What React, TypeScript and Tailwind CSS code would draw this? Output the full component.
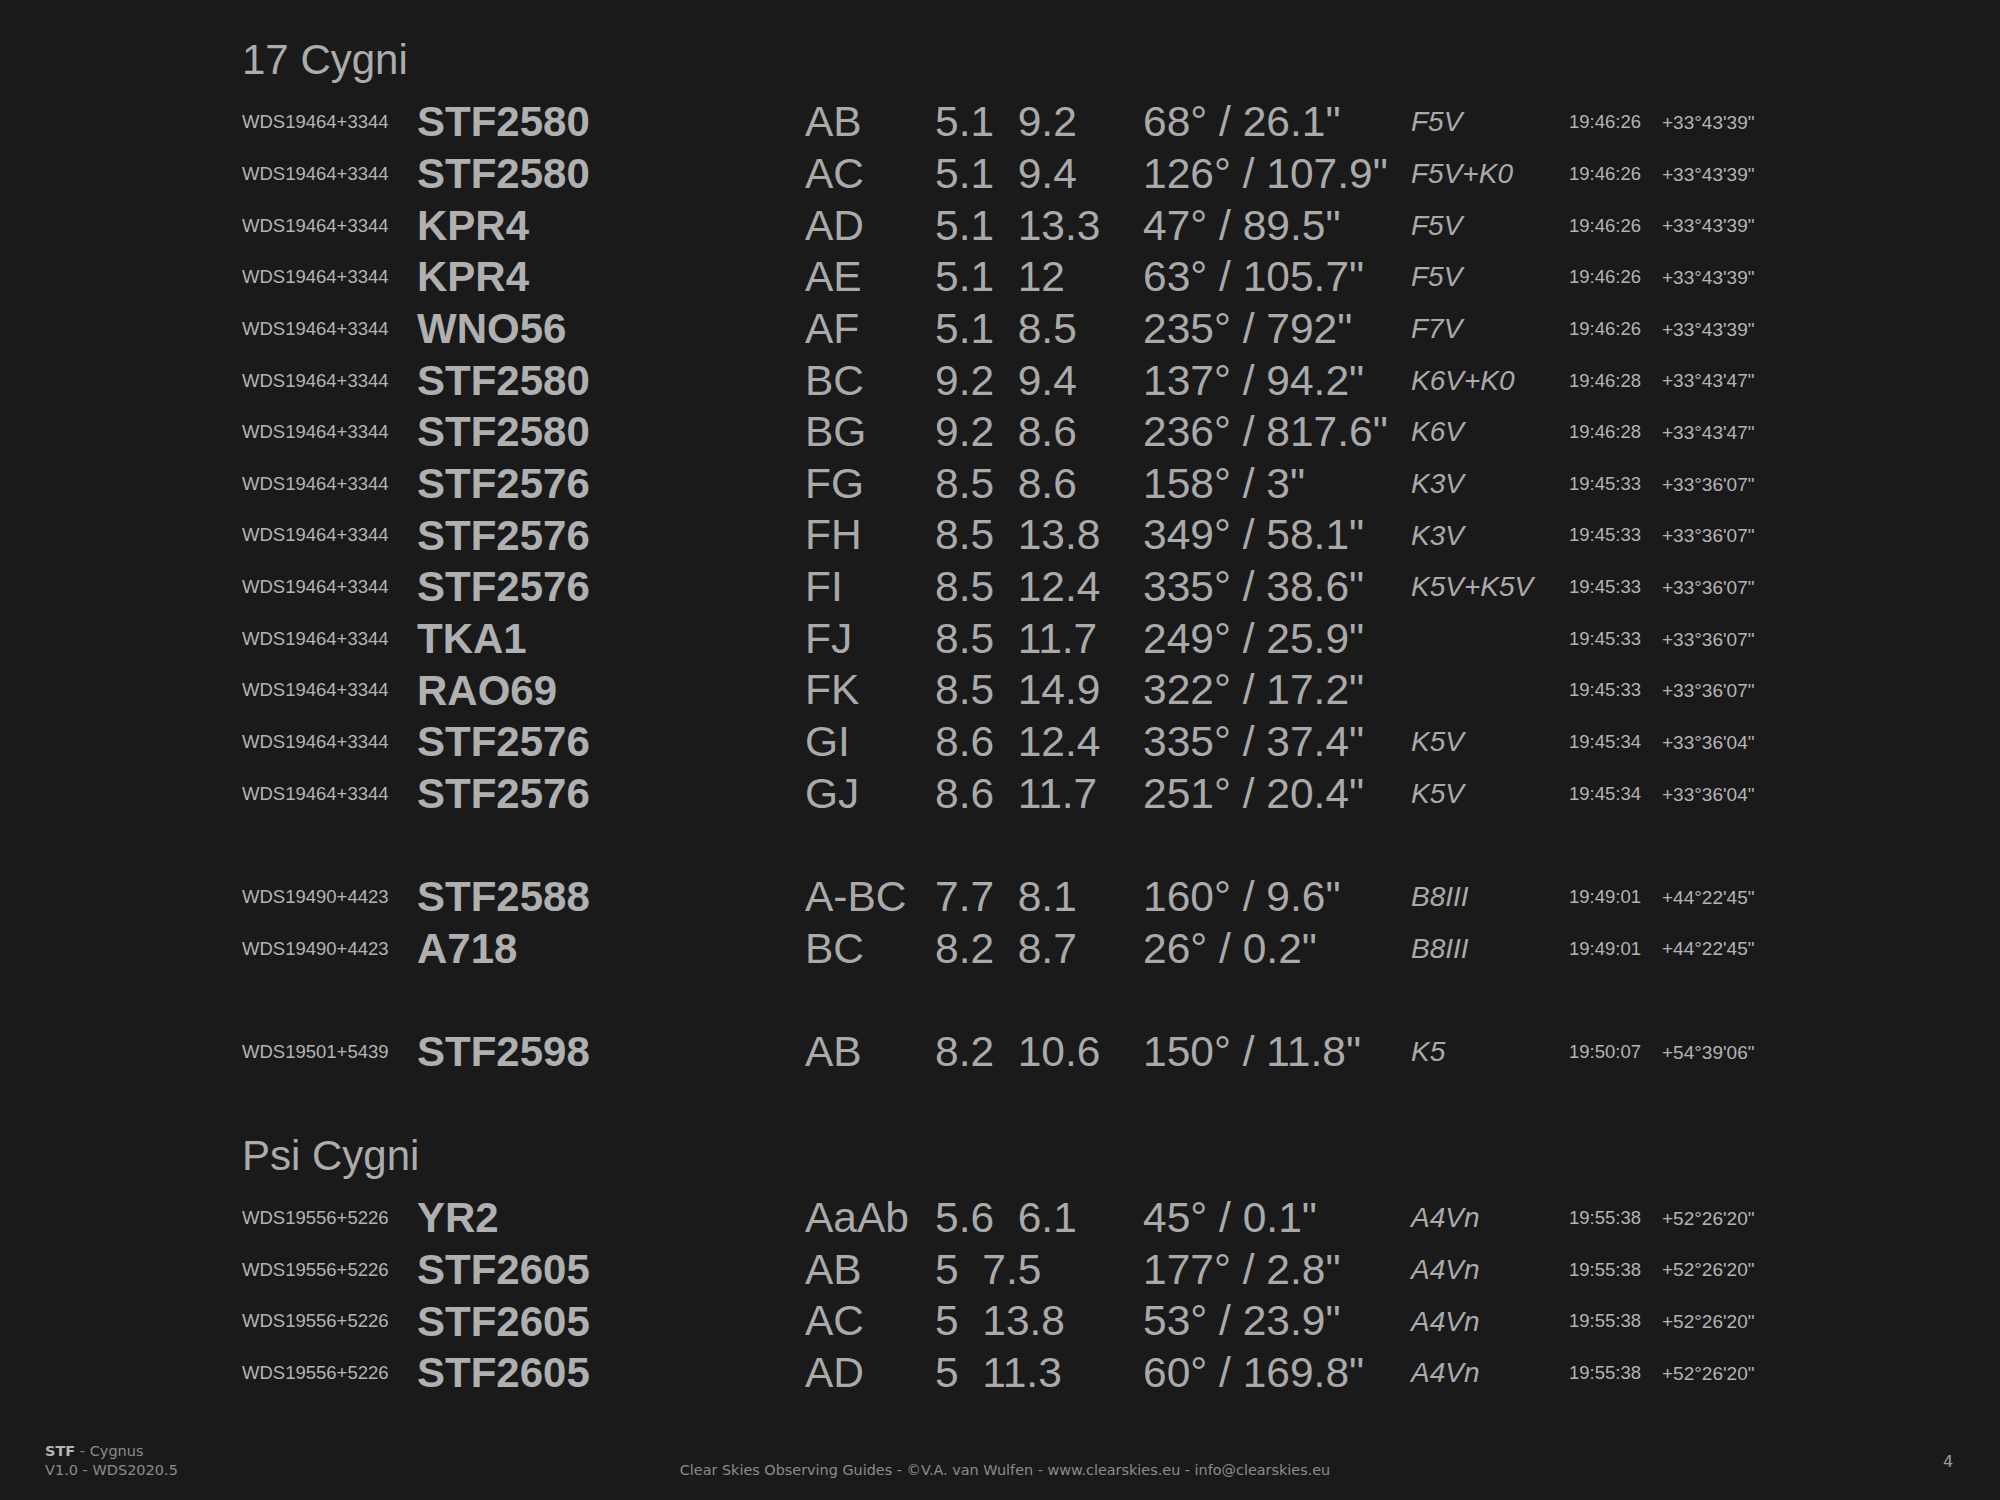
import React from 'react';

type Pair = {
  wds: string;
  name: string;
  comp: string;
  m1: string;
  m2: string;
  pa: string;
  spec: string;
  ra: string;
  dec: string;
};

type Group = { title?: string; pairs: Pair[] };

const p = (wds: string, name: string, comp: string, m1: string, m2: string, pa: string, spec: string, ra: string, dec: string): Pair => ({
  wds, name, comp, m1, m2, pa, spec, ra, dec,
});

const GROUPS: Group[] = [
  {
    title: '17 Cygni',
    pairs: [
      p('WDS19464+3344', 'STF2580', 'AB', '5.1', '9.2', '68° / 26.1"', 'F5V', '19:46:26', '+33°43\'39"'),
      p('WDS19464+3344', 'STF2580', 'AC', '5.1', '9.4', '126° / 107.9"', 'F5V+K0', '19:46:26', '+33°43\'39"'),
      p('WDS19464+3344', 'KPR4', 'AD', '5.1', '13.3', '47° / 89.5"', 'F5V', '19:46:26', '+33°43\'39"'),
      p('WDS19464+3344', 'KPR4', 'AE', '5.1', '12', '63° / 105.7"', 'F5V', '19:46:26', '+33°43\'39"'),
      p('WDS19464+3344', 'WNO56', 'AF', '5.1', '8.5', '235° / 792"', 'F7V', '19:46:26', '+33°43\'39"'),
      p('WDS19464+3344', 'STF2580', 'BC', '9.2', '9.4', '137° / 94.2"', 'K6V+K0', '19:46:28', '+33°43\'47"'),
      p('WDS19464+3344', 'STF2580', 'BG', '9.2', '8.6', '236° / 817.6"', 'K6V', '19:46:28', '+33°43\'47"'),
      p('WDS19464+3344', 'STF2576', 'FG', '8.5', '8.6', '158° / 3"', 'K3V', '19:45:33', '+33°36\'07"'),
      p('WDS19464+3344', 'STF2576', 'FH', '8.5', '13.8', '349° / 58.1"', 'K3V', '19:45:33', '+33°36\'07"'),
      p('WDS19464+3344', 'STF2576', 'FI', '8.5', '12.4', '335° / 38.6"', 'K5V+K5V', '19:45:33', '+33°36\'07"'),
      p('WDS19464+3344', 'TKA1', 'FJ', '8.5', '11.7', '249° / 25.9"', '', '19:45:33', '+33°36\'07"'),
      p('WDS19464+3344', 'RAO69', 'FK', '8.5', '14.9', '322° / 17.2"', '', '19:45:33', '+33°36\'07"'),
      p('WDS19464+3344', 'STF2576', 'GI', '8.6', '12.4', '335° / 37.4"', 'K5V', '19:45:34', '+33°36\'04"'),
      p('WDS19464+3344', 'STF2576', 'GJ', '8.6', '11.7', '251° / 20.4"', 'K5V', '19:45:34', '+33°36\'04"'),
    ],
  },
  {
    pairs: [
      p('WDS19490+4423', 'STF2588', 'A-BC', '7.7', '8.1', '160° / 9.6"', 'B8III', '19:49:01', '+44°22\'45"'),
      p('WDS19490+4423', 'A718', 'BC', '8.2', '8.7', '26° / 0.2"', 'B8III', '19:49:01', '+44°22\'45"'),
    ],
  },
  {
    pairs: [
      p('WDS19501+5439', 'STF2598', 'AB', '8.2', '10.6', '150° / 11.8"', 'K5', '19:50:07', '+54°39\'06"'),
    ],
  },
  {
    title: 'Psi Cygni',
    pairs: [
      p('WDS19556+5226', 'YR2', 'AaAb', '5.6', '6.1', '45° / 0.1"', 'A4Vn', '19:55:38', '+52°26\'20"'),
      p('WDS19556+5226', 'STF2605', 'AB', '5', '7.5', '177° / 2.8"', 'A4Vn', '19:55:38', '+52°26\'20"'),
      p('WDS19556+5226', 'STF2605', 'AC', '5', '13.8', '53° / 23.9"', 'A4Vn', '19:55:38', '+52°26\'20"'),
      p('WDS19556+5226', 'STF2605', 'AD', '5', '11.3', '60° / 169.8"', 'A4Vn', '19:55:38', '+52°26\'20"'),
    ],
  },
];

const Row: React.FC<{ pair: Pair }> = ({ pair }) => (
  <div className="flex items-center h-[51.66px] whitespace-pre">
    <span className="w-[175px] text-[18.5px] text-[#b4b4b4]">{pair.wds}</span>
    <span className="w-[388px] text-[42px] font-bold text-[#b0b0b0]">{pair.name}</span>
    <span className="w-[130px] text-[42.5px]">{pair.comp}</span>
    <span className="w-[208px] text-[42.5px]">{pair.m1 + '  ' + pair.m2}</span>
    <span className="w-[268px] text-[42.5px]">{pair.pa}</span>
    <span className="w-[158px] text-[28px] italic">{pair.spec}</span>
    <span className="w-[93px] text-[18.5px] text-[#b4b4b4]">{pair.ra}</span>
    <span className="text-[19px] text-[#b4b4b4]">{pair.dec}</span>
  </div>
);

export default function App() {
  return (
    <div className="relative w-[2000px] h-[1500px] bg-[#1a1a1a] text-[#aaaaaa] font-['Liberation_Sans',Arial,sans-serif] leading-none overflow-hidden">
      <div className="pl-[242px] pt-[34px] flex flex-col">
        {GROUPS.map((g, gi) => (
          <div key={gi} className={gi > 0 ? 'mt-[51.66px]' : ''}>
            {g.title && (
              <div className="h-[51.66px] mb-[11px] flex items-center text-[42px] text-[#acacac]">{g.title}</div>
            )}
            {g.pairs.map((pr, i) => (
              <Row key={i} pair={pr} />
            ))}
          </div>
        ))}
      </div>

      <div className="absolute left-0 right-0 bottom-0 h-[70px] font-['DejaVu_Sans',Verdana,sans-serif] text-[#8c8c8c]">
        <div className="absolute left-[45px] top-[12px] text-[14.5px] leading-[19px]">
          <div><span className="font-bold text-[#b5b5b5]">STF</span> - Cygnus</div>
          <div>V1.0 - WDS2020.5</div>
        </div>
        <div className="absolute left-0 right-0 top-[31px] text-center text-[14.4px] leading-[19px] pl-[10px]">
          Clear Skies Observing Guides - ©V.A. van Wulfen - www.clearskies.eu - info@clearskies.eu
        </div>
        <div className="absolute left-[1943px] top-[24px] text-[16px] text-[#9a9a9a]">4</div>
      </div>
    </div>
  );
}
